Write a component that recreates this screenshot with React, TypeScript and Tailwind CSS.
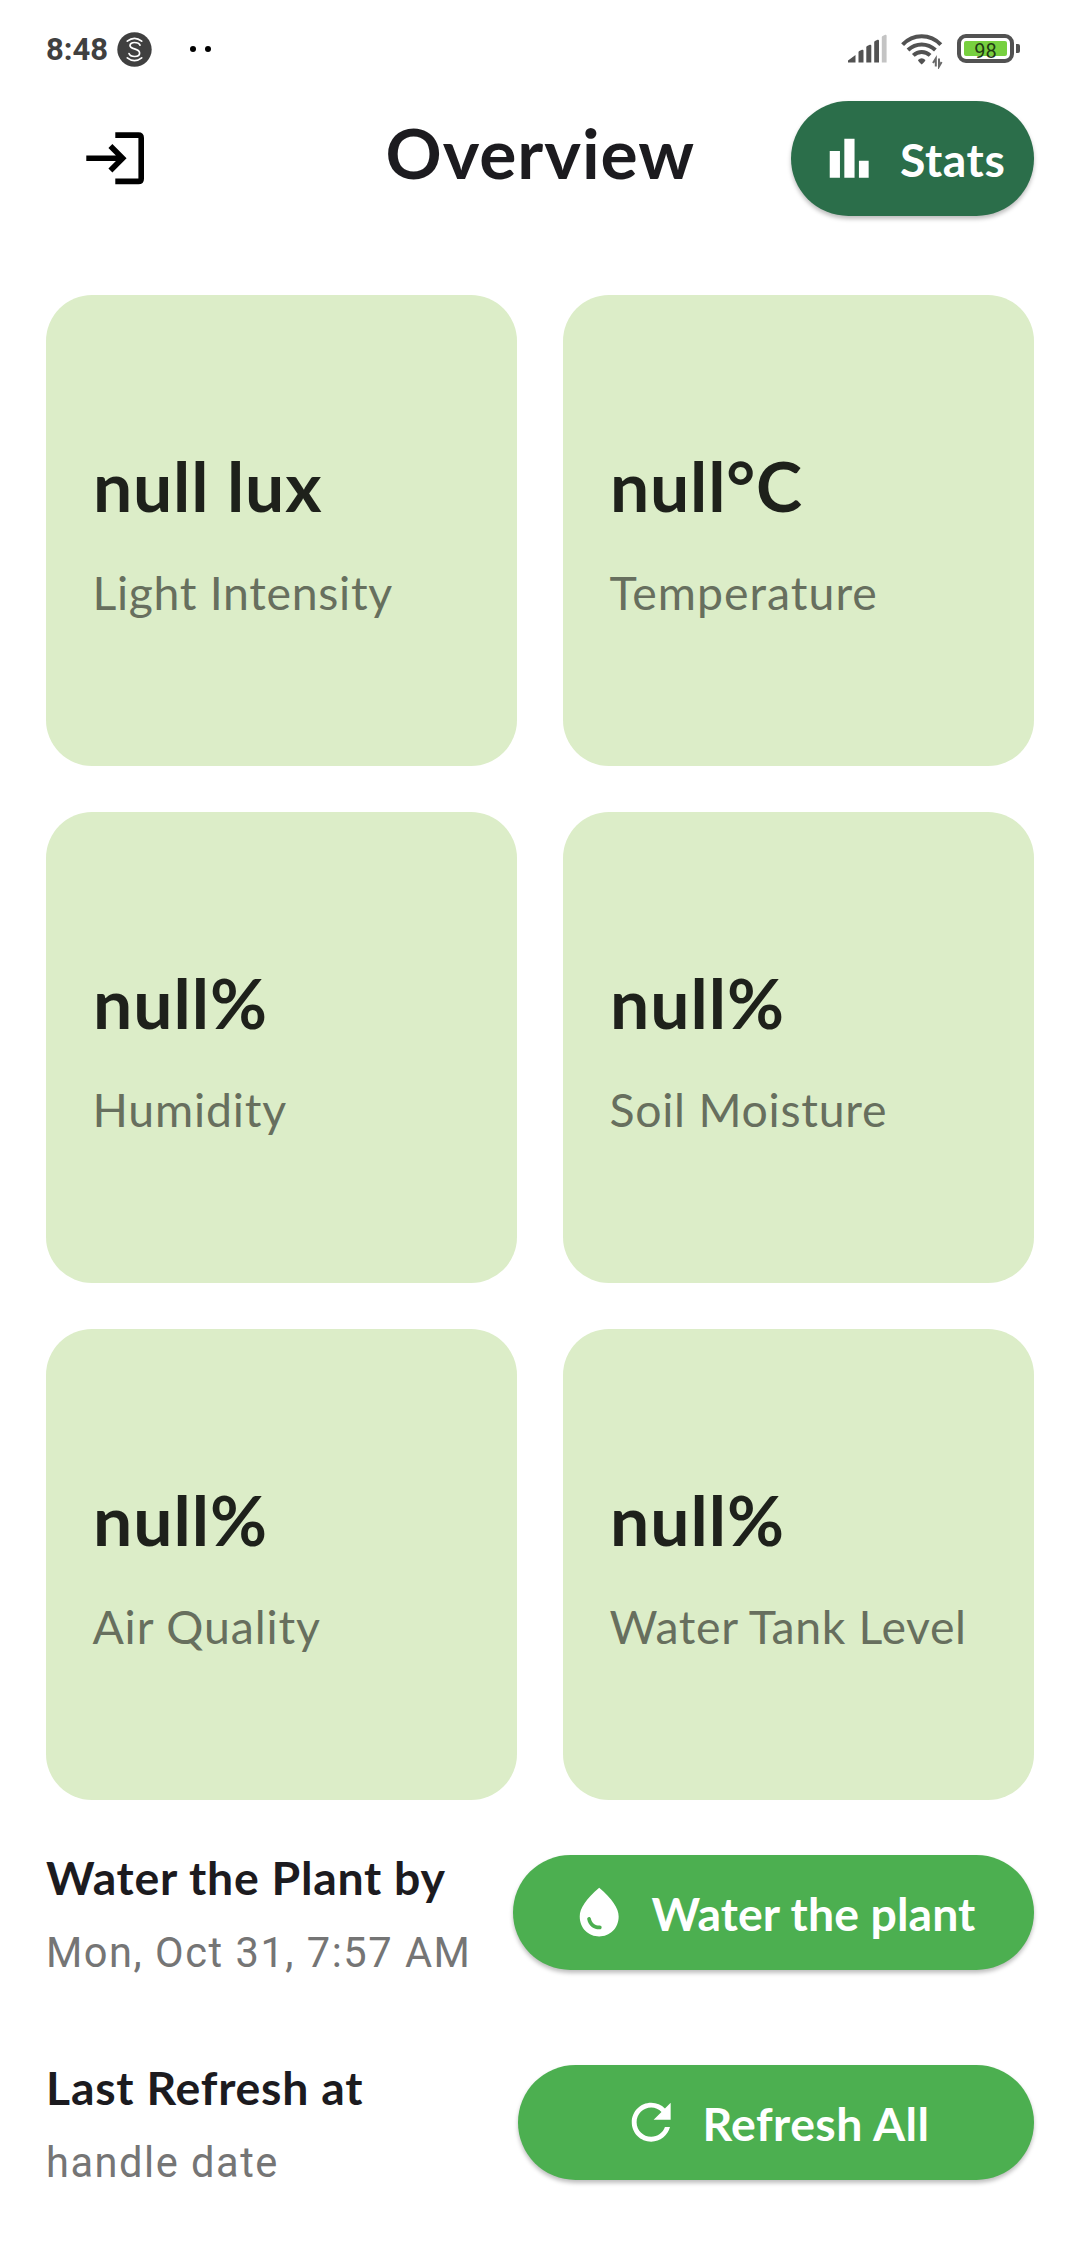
import type { ReactNode } from "react";

type Metric = { value: string; label: string; valueSpacing: string; labelSpacing: string };

const metrics: Metric[] = [
  { value: "null lux", label: "Light Intensity", valueSpacing: "tracking-[0.8px]", labelSpacing: "tracking-[0.7px]" },
  { value: "null°C", label: "Temperature", valueSpacing: "tracking-[0.8px]", labelSpacing: "tracking-[1.04px]" },
  { value: "null%", label: "Humidity", valueSpacing: "tracking-[1px]", labelSpacing: "tracking-[0.85px]" },
  { value: "null%", label: "Soil Moisture", valueSpacing: "tracking-[1px]", labelSpacing: "tracking-[0.75px]" },
  { value: "null%", label: "Air Quality", valueSpacing: "tracking-[1px]", labelSpacing: "tracking-[0.9px]" },
  { value: "null%", label: "Water Tank Level", valueSpacing: "tracking-[1px]", labelSpacing: "tracking-[0.65px]" },
];

function StatusBar() {
  return (
    <div className="flex h-[100px] items-start pr-[60px] pl-[46px]">
      <span className="mt-[32px] w-[62px] font-[Roboto,sans-serif] text-[31px] leading-[36px] font-bold text-[#404040]">
        8:48
      </span>
      <svg className="mt-[32px] ml-[9px] h-[35px] w-[35px]" viewBox="0 0 35 35" fill="none">
        <circle cx="17.5" cy="17.5" r="17.2" fill="#404040" />
        <g stroke="#fff" strokeWidth="1.7" strokeLinecap="round">
          <path d="M10.3 9.2Q17.5 3.6 24.7 9.2" />
          <path d="M23 13.2C21.5 9.8 13 9.3 13 13.5C13 17.8 22.6 16 22.6 21C22.6 25.8 13.3 25.3 12 21.5" />
          <path d="M10.3 25.8Q17.5 31.4 24.7 25.8" />
        </g>
      </svg>
      <div className="mt-[46px] ml-[38px] flex gap-[9px]">
        <span className="h-[6px] w-[6px] rounded-full bg-black" />
        <span className="h-[6px] w-[6px] rounded-full bg-black" />
      </div>
      <svg className="mt-[34px] ml-auto h-[29px] w-[40px]" viewBox="0 0 40 29" fill="#525252">
        <path d="M0 28.5V26.5L7.5 21V28.5Z" />
        <path d="M10.5 28.5V18.5Q10.5 17.6 11.3 17.1L14 15.8Q15.5 15.4 15.5 16.8V28.5Z" />
        <path d="M18.3 28.5V13.5Q18.3 12.6 19.1 12.1L21.8 10.8Q23.3 10.4 23.3 11.8V28.5Z" />
        <path d="M26.2 28.5V8.5Q26.2 7.6 27 7.1L29.5 5.8Q31 5.4 31 6.8V28.5Z" />
        <path d="M33.8 28.5V3.5Q33.8 2.6 34.6 2.1L37.2 .8Q38.6 .4 38.6 1.8V28.5Z" fill="#c4c4c4" />
      </svg>
      <svg className="mt-[33px] ml-[13px] h-[36px] w-[42px]" viewBox="0 0 42 36" fill="none">
        <g stroke="#525252" strokeWidth="4">
          <path d="M1.6 11.6Q9.5 3.2 20.7 3.2T39.8 11.6" />
          <path d="M7 17Q13 11.4 20.7 11.4T34.4 17" />
          <path d="M12.3 22.4Q16 19 20.7 19T29.1 22.4" />
        </g>
        <path d="M17 27Q20.7 23.6 24.4 27Q24.4 28.2 20.7 31.4Q17 28.2 17 27Z" fill="#525252" />
        <g stroke="#6a6a6a" strokeWidth="2">
          <path d="M34.8 33.5V25.5L32 30" />
          <path d="M38 25.5V33.5L40.6 29" />
        </g>
      </svg>
      <div className="mt-[34px] ml-[14px] flex items-center gap-[2px]">
        <div className="flex h-[29px] w-[57px] items-center justify-center rounded-[9px] border-4 border-[#525252]">
          <div className="flex h-[15px] w-[43px] items-center justify-center rounded-[2px] bg-[#77d03f]">
            <span className="mt-[4px] font-[Roboto,sans-serif] text-[20px] leading-[20px] text-[#1f3a14]">98</span>
          </div>
        </div>
        <span className="h-[9px] w-[4px] rounded-r-[2px] bg-[#525252]" />
      </div>
    </div>
  );
}

function LogoutIcon() {
  return (
    <svg className="h-[54px] w-[60px]" viewBox="0 0 60 54" fill="none">
      <path
        d="M31.3 1.3H54.4Q60 1.3 60 6.9V47.7Q60 53.3 54.4 53.3H31.3V47.6H54.4V7H31.3Z"
        fill="#000"
      />
      <path d="M2.3 27.3H39M26.4 15.1L38.6 27.3L26.4 39.5" stroke="#000" strokeWidth="5.6" />
    </svg>
  );
}

function BarChartIcon() {
  return (
    <svg className="h-[58.4px] w-[58.4px]" viewBox="0 0 24 24" fill="currentColor">
      <path d="M4 9h4.2v11H4zM16 13h4v7h-4zM10 4h4.2v16H10z" />
    </svg>
  );
}

function DropIcon() {
  return (
    <svg className="h-[58.4px] w-[58.4px]" viewBox="0 0 24 24" fill="currentColor">
      <path d="M12 2c-5.33 4.55-8 8.48-8 11.8 0 4.98 3.8 8.2 8 8.2s8-3.22 8-8.2c0-3.32-2.67-7.25-8-11.8zM7.83 14c.37 0 .67.26.74.62.41 2.22 2.28 2.98 3.64 2.87.43-.02.79.32.79.75 0 .4-.32.73-.72.75-2.13.13-4.62-1.09-5.19-4.12-.08-.45.28-.87.74-.87z" />
    </svg>
  );
}

function RefreshIcon() {
  return (
    <svg className="h-[58.4px] w-[58.4px]" viewBox="0 0 24 24" fill="currentColor">
      <path d="M17.65 6.35C16.2 4.9 14.21 4 12 4c-4.42 0-7.99 3.58-7.99 8s3.57 8 7.99 8c3.73 0 6.84-2.55 7.73-6h-2.08c-.82 2.33-3.04 4-5.65 4-3.31 0-6-2.69-6-6s2.69-6 6-6c1.66 0 3.14.69 4.22 1.78L13 11h7V4l-2.35 2.35z" />
    </svg>
  );
}

function PillButton({ className, icon, children }: { className: string; icon: ReactNode; children: ReactNode }) {
  return (
    <button
      className={`flex h-[115.5px] shrink-0 items-center rounded-full text-[46.4px] leading-[56px] font-bold whitespace-nowrap text-white shadow-[0_3px_4px_rgba(0,0,0,0.26)] ${className}`}
    >
      {icon}
      {children}
    </button>
  );
}

function Info({ title, detail, spacing, detailSpacing }: { title: string; detail: string; spacing: string; detailSpacing: string }) {
  return (
    <div className="-mt-[6px] flex flex-col gap-[24px] whitespace-nowrap">
      <h2 className={`text-[46.4px] leading-[56px] font-bold text-[#1c1b1f] ${spacing}`}>{title}</h2>
      <p className={`font-[Roboto,sans-serif] text-[41.6px] leading-[47px] text-[#757575] ${detailSpacing}`}>{detail}</p>
    </div>
  );
}

export default function App() {
  return (
    <div className="h-[2246px] w-[1080px] overflow-hidden bg-white font-[Lato,sans-serif]">
      <StatusBar />
      <header className="flex h-[116px] items-center pr-[46px] pl-[84px]">
        <LogoutIcon />
        <h1 className="-mt-[12px] mr-[96px] ml-auto text-[69.6px] leading-[84px] font-bold tracking-[0.95px] text-[#1c1b1f]">
          Overview
        </h1>
        <PillButton className="mt-[1px] w-[243px] bg-[#2b6e4a] pl-[28.5px] tracking-[0.6px]" icon={<BarChartIcon />}>
          <span className="mt-[1px] ml-[22px]">Stats</span>
        </PillButton>
      </header>

      <main className="mt-[79px] grid grid-cols-[471px_471px] gap-[46px] px-[46px]">
        {metrics.map((m, i) => (
          <section
            key={i}
            className="flex h-[471px] flex-col justify-center gap-[37px] rounded-[46px] bg-[#dcedc8] pt-[2px] pl-[46.4px] whitespace-nowrap"
          >
            <p className={`ml-[0.6px] text-[69.6px] leading-[84px] font-bold text-[#1e211b] ${m.valueSpacing}`}>{m.value}</p>
            <p className={`text-[46.4px] leading-[56px] text-[#676f5e] ${m.labelSpacing}`}>{m.label}</p>
          </section>
        ))}
      </main>

      <footer className="mt-[54.5px] flex flex-col gap-[94px] pr-[46px] pl-[46px]">
        <div className="flex h-[116px] items-start justify-between">
          <Info
            title="Water the Plant by"
            detail="Mon, Oct 31, 7:57 AM"
            spacing="tracking-[0.75px]"
            detailSpacing="tracking-[1.52px]"
          />
          <PillButton className="w-[521px] bg-[#4caf50] pl-[57px] tracking-[0.1px]" icon={<DropIcon />}>
            <span className="mt-[2px] ml-[23px]">Water the plant</span>
          </PillButton>
        </div>
        <div className="flex h-[116px] items-start justify-between">
          <Info
            title="Last Refresh at"
            detail="handle date"
            spacing="tracking-[0.78px]"
            detailSpacing="tracking-[1.52px]"
          />
          <PillButton className="w-[516px] bg-[#4caf50] pl-[104px] tracking-[0.45px]" icon={<RefreshIcon />}>
            <span className="mt-[2px] ml-[22px]">Refresh All</span>
          </PillButton>
        </div>
      </footer>
    </div>
  );
}
